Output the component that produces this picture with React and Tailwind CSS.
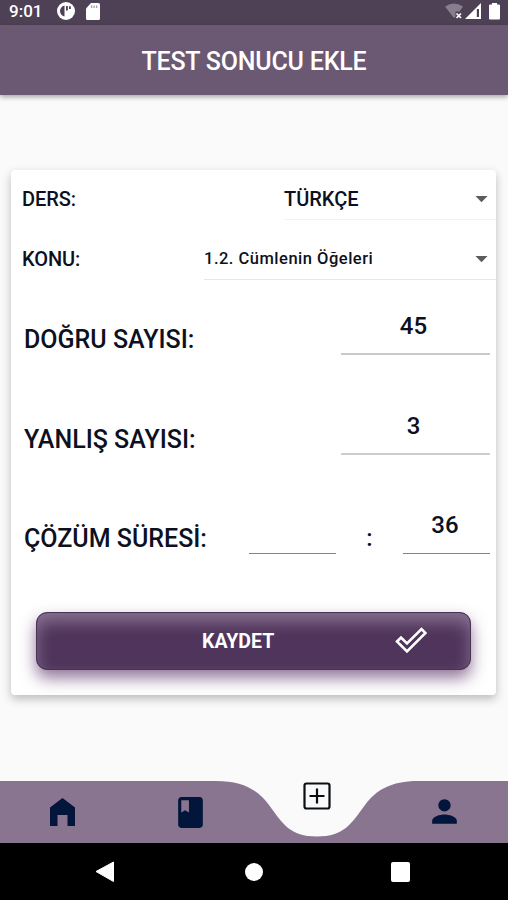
import React, { useState } from 'react';
import { MdBook, MdPerson, MdArrowDropDown } from 'react-icons/md';

const StatusBar = () => (
  <div className="flex h-[25px] shrink-0 items-center bg-[#4f4155] pl-[9px] pr-[8px] pb-[3px] text-white">
    <span className="w-[48px] text-[17px] font-medium leading-none">9:01</span>
    <svg className="h-[18px] w-[18px]" viewBox="0 0 18 18">
      <circle cx="9" cy="9" r="9" fill="#fff" />
      <path d="M7.500 3.400C4.600 4.200 3 6.400 3 9s1.600 4.800 4.500 5.400z" fill="#4f4155" />
      <path d="M9 4h1.800v4.500H9zM12 4.200h1.800v2.800h-1.800z" fill="#4f4155" />
    </svg>
    <svg className="ml-[11px] h-[17px] w-[14px]" viewBox="0 0 14 17">
      <path d="M5 0h7.500Q14 0 14 1.500v14q0 1.500-1.500 1.500h-11Q0 17 0 15.500V5.500z" fill="#fff" />
      <path d="M5 2.500h1.300v2.500H5zM7.500 2.500h1.300v2.500H7.500zM10 2.500h1.300v2.500H10z" fill="#a79fab" />
    </svg>
    <div className="ml-auto flex items-center">
      <svg className="h-[18px] w-[19px]" viewBox="0 0 19 18">
        <path d="M0 4.500Q9 -1.500 18 4.500L14.500 9.500H10.500V14.500L9 16z" fill="#887d8c" />
        <path d="M11.500 11.500l4.500 4.500M16 11.500l-4.500 4.500" stroke="#fff" strokeWidth="1.700" />
      </svg>
      <svg className="ml-px h-[18px] w-[16px]" viewBox="0 0 16 18">
        <path d="M16 1v16H0z" fill="#fff" />
        <path d="M11.800 7h2.200v8h-2.200z" fill="#4f4155" />
      </svg>
      <svg className="ml-[8px] h-[18px] w-[11px]" viewBox="0 0 11 18">
        <path d="M3 1h5v1.500H10q1 0 1 1v13q0 1-1 1H1q-1 0-1-1V3.500q0-1 1-1h2z" fill="#fff" />
      </svg>
    </div>
  </div>
);

const SelectRow = ({ label, value, widthClass, valueClass, lineClass }) => (
  <div className="flex items-end justify-between pl-[11px]">
    <div className="mb-[1px] flex h-[40px] items-center text-[20px] font-medium leading-none tracking-[-0.1px]">
      {label}
    </div>
    <button className={`flex h-[41px] items-center justify-between border-b text-left ${widthClass} ${lineClass}`}>
      <span className={`font-medium leading-none whitespace-nowrap ${valueClass}`}>{value}</span>
      <MdArrowDropDown className="mb-[1px] h-[29px] w-[29px] text-[#5c5c5c]" />
    </button>
  </div>
);

const FieldRow = ({ label, heightClass, children }) => (
  <div className={`flex items-end justify-between pl-[13px] pr-[6px] ${heightClass}`}>
    <label className="mb-[3px] text-[25px] font-medium leading-none whitespace-nowrap">{label}</label>
    <div className="flex items-end">{children}</div>
  </div>
);

const NumberInput = ({ value, onChange, className }) => (
  <input
    value={value}
    onChange={e => onChange(e.target.value)}
    className={`h-[48px] bg-transparent text-center text-[24px] font-medium leading-none outline-none ${className}`}
  />
);

const BottomNav = () => (
  <div className="relative h-[62px] shrink-0">
    <svg className="absolute inset-0 h-[62px] w-full" viewBox="0 0 508 62" preserveAspectRatio="none">
      <path
        d="M0 0H216C243 0 258 9 269 24C283 43 290 55.500 317 55.500C344 55.500 351 43 365 24C376 9 391 0 418 0H508V62H0z"
        fill="#89758f"
      />
    </svg>
    <div className="relative flex h-full items-center pl-[50px] text-[#02153a]">
      <svg className="h-[28px] w-[25px]" viewBox="0 0 25 28">
        <path d="M12.500 0L25 9.500V28H17.500V17H7.500V28H0V9.500z" fill="currentColor" />
      </svg>
      <MdBook className="ml-[97px] h-[37px] w-[37px]" />
      <svg className="mb-[33px] ml-[94px] h-[28px] w-[28px]" viewBox="0 0 28 28" fill="none" stroke="#0b0f14">
        <rect x="1.500" y="1.500" width="25" height="25" rx="2" strokeWidth="2.200" />
        <path d="M14 6.500v15M6.500 14h15" strokeWidth="2.200" />
      </svg>
      <MdPerson className="mb-[1px] ml-[95px] h-[37px] w-[37px]" />
    </div>
  </div>
);

const SystemBar = () => (
  <div className="flex h-[57px] shrink-0 items-center bg-black text-white">
    <svg className="ml-[95px] h-[21px] w-[20px]" viewBox="0 0 20 21">
      <path d="M1 10.500L18.500 1V20.500z" fill="#fff" stroke="#fff" strokeLinejoin="round" />
    </svg>
    <div className="ml-[130px] h-[18px] w-[18px] rounded-full bg-white" />
    <div className="ml-[128px] h-[20px] w-[19px] rounded-[2px] bg-white" />
  </div>
);

const App = () => {
  const [correct, setCorrect] = useState('45');
  const [wrong, setWrong] = useState('3');
  const [minutes, setMinutes] = useState('');
  const [seconds, setSeconds] = useState('36');

  return (
    <div className="flex h-[900px] w-[508px] flex-col overflow-hidden bg-[#fafafa] font-['Roboto',sans-serif] text-[#0c1020]">
      <StatusBar />
      <header className="flex h-[70px] shrink-0 items-center justify-center bg-[#6b5872] pt-[2px] shadow-[0_2px_5px_rgba(0,0,0,0.35)]">
        <h1 className="text-[25px] font-medium leading-none tracking-[-0.2px] text-white">TEST SONUCU EKLE</h1>
      </header>

      <main className="flex-1 pl-[11px] pr-[12px] pt-[75px]">
        <div className="h-[525px] rounded-[4px] bg-white pt-[9px] shadow-[0_4px_10px_rgba(0,0,0,0.25)]">
          <div className="flex flex-col gap-[19px]">
            <SelectRow
              label="DERS:"
              value="TÜRKÇE"
              widthClass="w-[212px]"
              valueClass="text-[20px]"
              lineClass="border-[#f3f3f3]"
            />
            <SelectRow
              label="KONU:"
              value="1.2. Cümlenin Öğeleri"
              widthClass="w-[292px]"
              valueClass="pt-[1px] text-[16.500px] tracking-[0.5px]"
              lineClass="border-[#e6e6e6]"
            />
          </div>

          <div>
            <FieldRow label="DOĞRU SAYISI:" heightClass="h-[75px]">
              <NumberInput value={correct} onChange={setCorrect} className="w-[149px] border-b-2 border-[#c9c9c9] pr-[4px] pb-[8px]" />
            </FieldRow>
            <FieldRow label="YANLIŞ SAYISI:" heightClass="h-[100px]">
              <NumberInput value={wrong} onChange={setWrong} className="w-[149px] border-b-2 border-[#cdcdcd] pr-[4px] pb-[8px]" />
            </FieldRow>
            <FieldRow label="ÇÖZÜM SÜRESİ:" heightClass="h-[99px]">
              <NumberInput value={minutes} onChange={setMinutes} className="w-[87px] border-b border-[#858585]" />
              <span className="mb-[4px] w-[67px] text-center text-[24px] font-medium leading-none">:</span>
              <NumberInput value={seconds} onChange={setSeconds} className="w-[87px] border-b border-[#858585] pr-[3px] pb-[9px]" />
            </FieldRow>
          </div>

          <button className="ml-[25px] mt-[58px] flex h-[58px] w-[435px] items-center rounded-[11px] border border-[#4a3257] bg-[#4f345b] text-white shadow-[0_8px_16px_#80638ae0,inset_0_9px_16px_#86708f]">
            <span className="ml-[165px] w-[193px] pt-[1px] text-left text-[19.500px] font-bold leading-none">KAYDET</span>
            <svg className="h-[28px] w-[32px]" viewBox="0 0 32 28" fill="none" stroke="#fff" strokeWidth="2.600">
              <path d="M2 14.500L6 10.500L12 16.500L26.500 2L30.500 6L12 24.500z" />
            </svg>
          </button>
        </div>
      </main>

      <BottomNav />
      <SystemBar />
    </div>
  );
};

export default App;
